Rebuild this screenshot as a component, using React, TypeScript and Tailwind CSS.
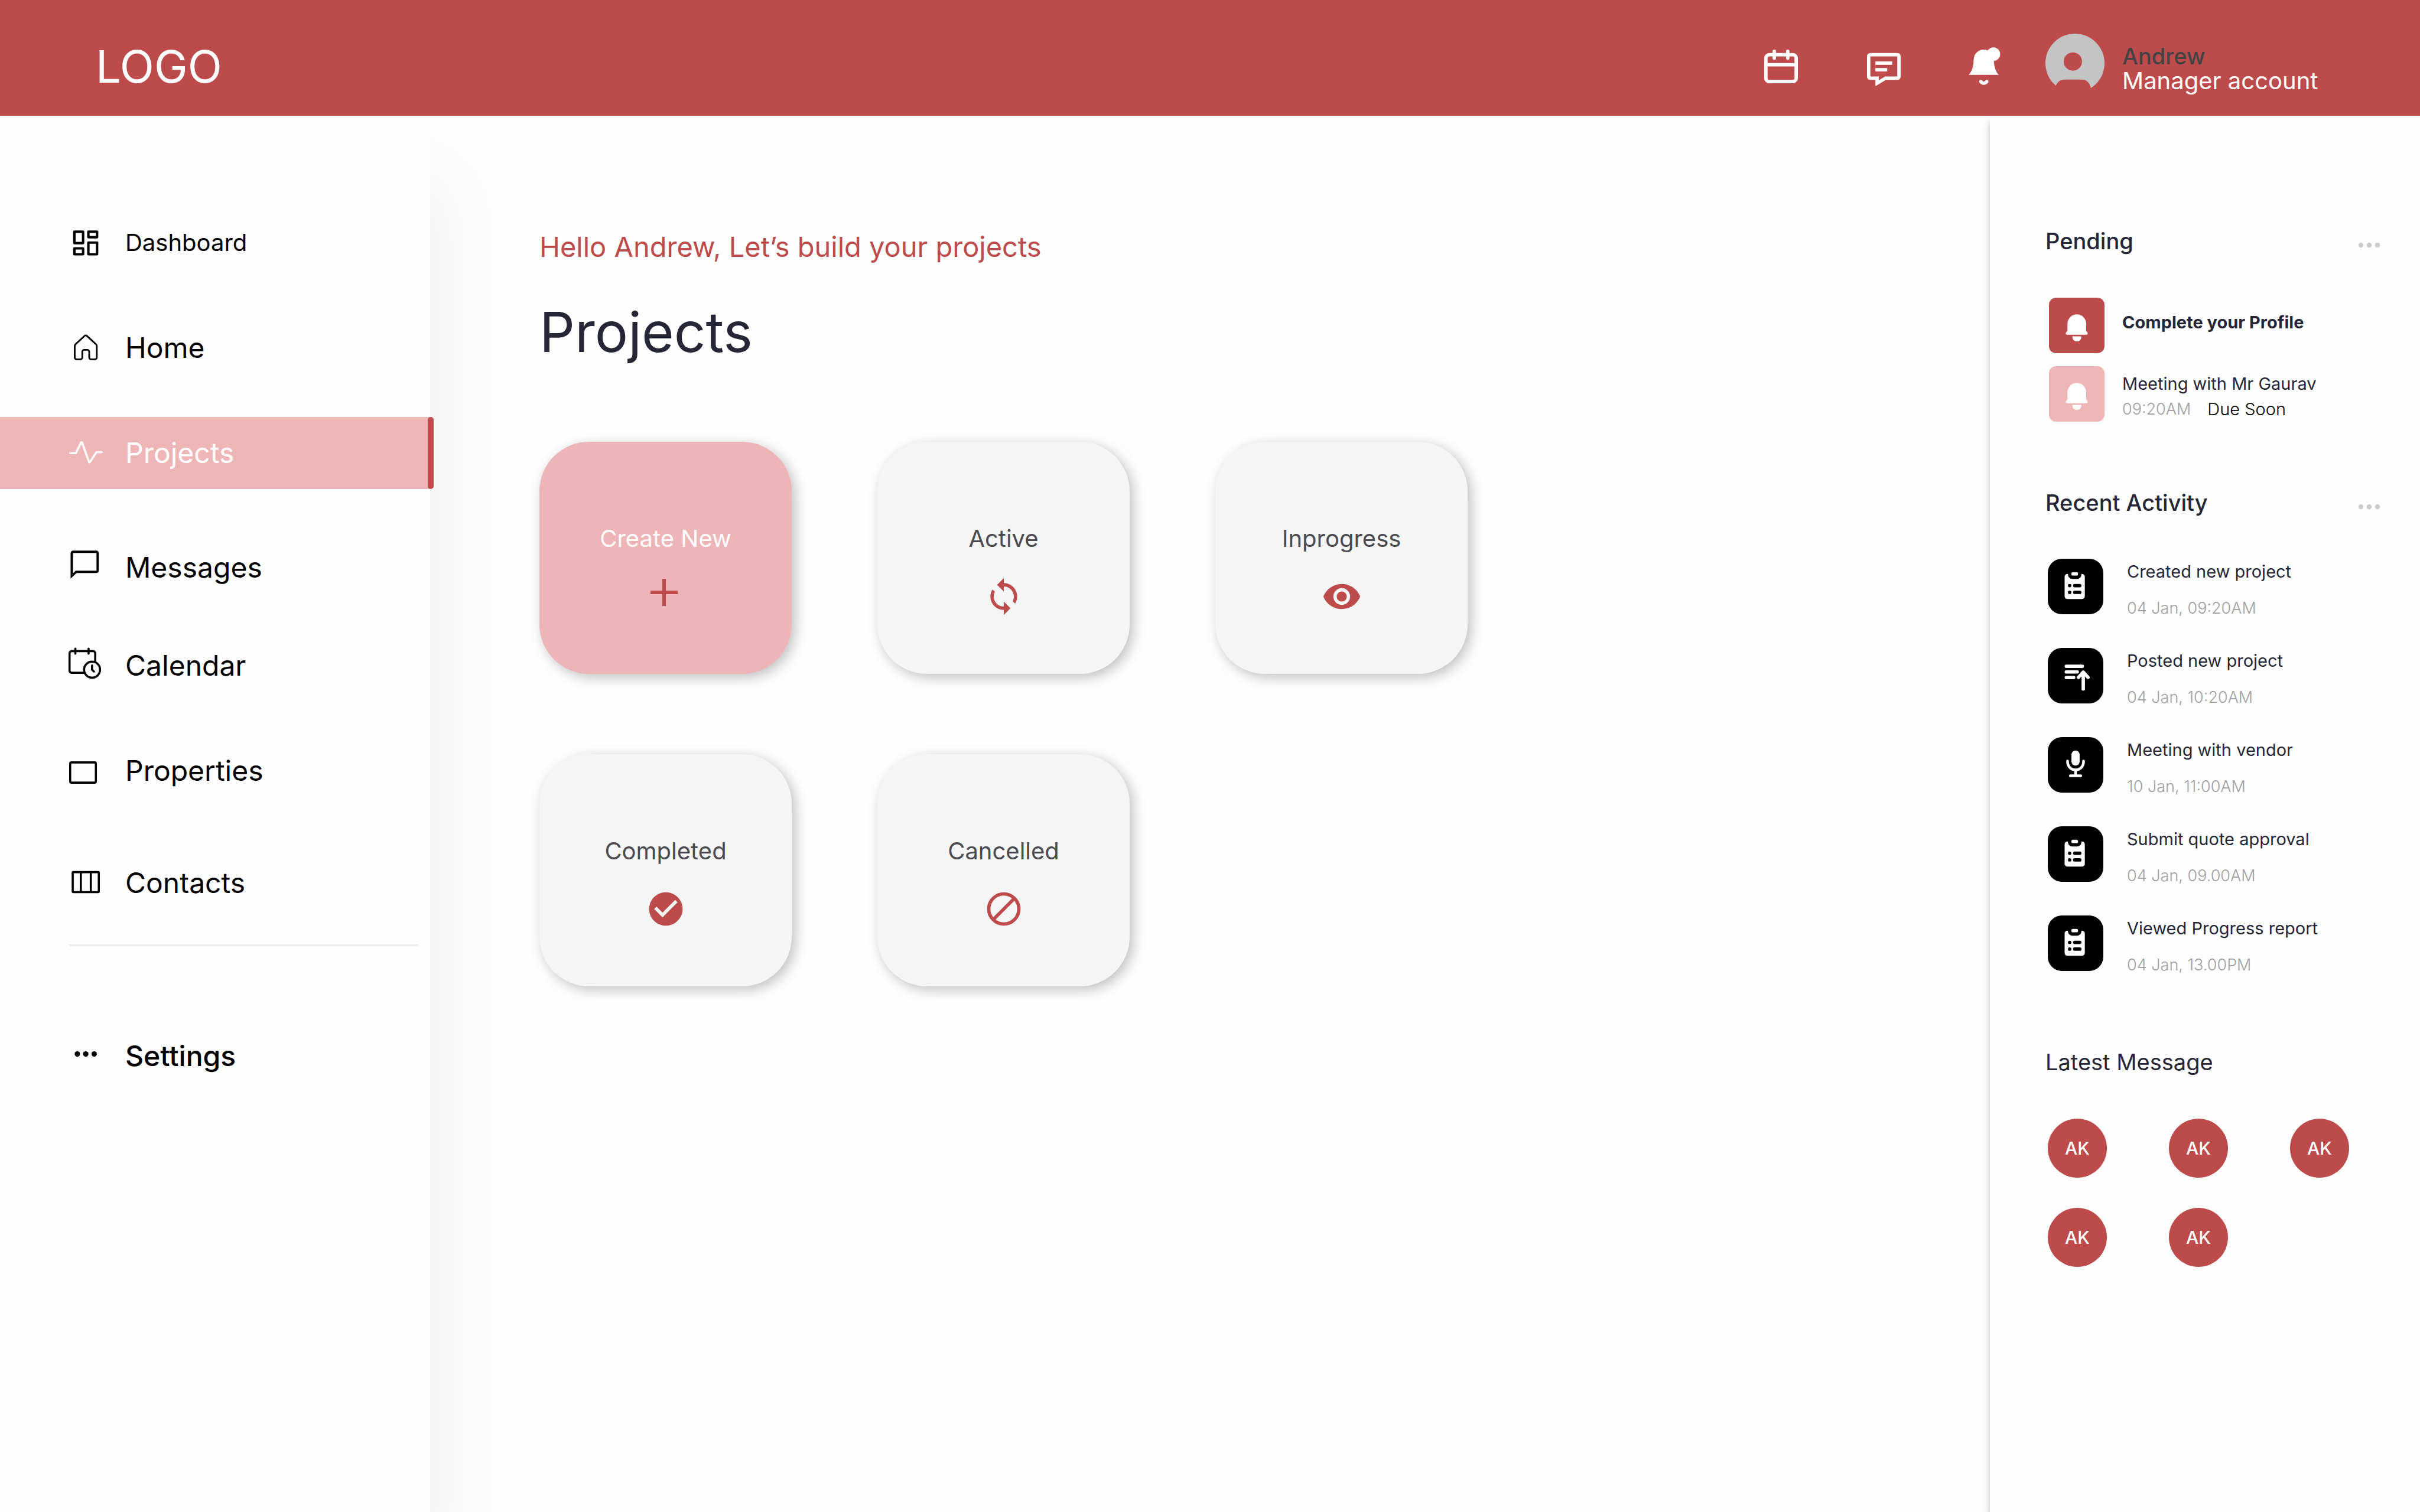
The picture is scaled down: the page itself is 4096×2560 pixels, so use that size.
import type { ReactNode } from "react";

/* ---------- navigation icons (80-unit grid) ---------- */

function NavIcon({ children }: { children: ReactNode }) {
  return (
    <svg
      viewBox="0 0 80 80"
      className="size-[57px] shrink-0 overflow-visible"
      fill="none"
      stroke="currentColor"
      strokeWidth={5}
      aria-hidden="true"
    >
      {children}
    </svg>
  );
}

const dashboardIcon = (
  <NavIcon>
    <g strokeWidth={5.8} strokeLinejoin="round">
      <rect x="12.5" y="12.9" width="20.7" height="27.2" />
      <rect x="12.5" y="52.7" width="20.7" height="14" />
      <rect x="45.7" y="12.9" width="20.7" height="13.2" />
      <rect x="45.7" y="38.9" width="20.7" height="27.8" />
    </g>
  </NavIcon>
);

const homeIcon = (
  <NavIcon>
    <path
      strokeWidth={4}
      d="M13.3 62V35a6 6 0 0 1 2-4.5L36.5 11a4.5 4.5 0 0 1 6 0l21.2 19.5a6 6 0 0 1 2 4.5v27a4.5 4.5 0 0 1-4.5 4.5h-9a4.5 4.5 0 0 1-4.5-4.5V48.5a4.5 4.5 0 0 0-4.5-4.5h-7.4a4.5 4.5 0 0 0-4.5 4.5V62a4.5 4.5 0 0 1-4.5 4.5h-9A4.5 4.5 0 0 1 13.3 62z"
    />
  </NavIcon>
);

const activityIcon = (
  <NavIcon>
    <path
      strokeLinecap="round"
      strokeLinejoin="round"
      d="M2.5 39.6H16L28 15q1.5-2.5 3 0L47 60q1.2 2.5 3 0L65 37.3h12.5"
    />
  </NavIcon>
);

const messageIcon = (
  <NavIcon>
    <path
      fill="currentColor"
      stroke="none"
      fillRule="evenodd"
      d="M9.5-1h55a6 6 0 0 1 6 6v41.3a6 6 0 0 1-6 6H17.5L3.5 65.7V5a6 6 0 0 1 6-6zM9.2 4.7V53l6.3-6.2H65V4.7z"
    />
  </NavIcon>
);

const calendarIcon = (
  <NavIcon>
    <path d="M38 56.3H6a5 5 0 0 1-5-5V9.7a5 5 0 0 1 5-5h51a5 5 0 0 1 5 5V30" />
    <path strokeLinecap="round" d="M14.8-1v12M46.2-1v12" />
    <circle cx="54.5" cy="48.9" r="19" />
    <path strokeLinecap="round" strokeLinejoin="round" d="M54.5 39v10l4.5 4.3" />
  </NavIcon>
);

const propertiesIcon = (
  <NavIcon>
    <rect x="2.5" y="19.5" width="61" height="48" rx="3" />
  </NavIcon>
);

const contactsIcon = (
  <NavIcon>
    <rect x="8.5" y="13.5" width="62" height="47.5" rx="1" />
    <path d="M27.8 13.5V61M51.5 13.5V61" />
  </NavIcon>
);

const settingsIcon = (
  <NavIcon>
    <g fill="currentColor" stroke="none">
      <circle cx="19.5" cy="34.5" r="6.4" />
      <circle cx="39.5" cy="34.5" r="6.4" />
      <circle cx="59.5" cy="34.5" r="6.4" />
    </g>
  </NavIcon>
);

/* ---------- header icons ---------- */

function HeaderCalendar() {
  return (
    <svg viewBox="0 0 80 80" className="size-[57px] overflow-visible" fill="none" stroke="white" strokeWidth={8} aria-hidden="true">
      <rect x="4" y="12" width="72" height="64" rx="8" />
      <path strokeLinecap="round" d="M24 4v16M56 4v16" />
      <path d="M4 36h72" />
    </svg>
  );
}

function HeaderMessage() {
  return (
    <svg viewBox="0 0 80 80" className="size-[57px] overflow-visible" fill="white" aria-hidden="true">
      <path
        fillRule="evenodd"
        d="M8 8h64a8 8 0 0 1 8 8v48a8 8 0 0 1-8 8H45L20 87V72H8a8 8 0 0 1-8-8V16a8 8 0 0 1 8-8zM8 16v48h20v9l15-9h29V16z"
      />
      <path d="M20 28h40v8H20zM20 44h28v8H20z" />
    </svg>
  );
}

function HeaderBell() {
  return (
    <svg viewBox="0 0 80 80" className="size-[57px] overflow-visible" fill="white" aria-hidden="true">
      <path d="M12 24a24 24 0 0 1 48 0c0 16 4 28 11.5 36H0C8 52 12 40 12 24z" />
      <circle cx="59" cy="10.7" r="16" />
      <path d="M29 76q7 8 14 0" fill="none" stroke="white" strokeWidth={8} strokeLinecap="round" />
    </svg>
  );
}

function Avatar() {
  return (
    <svg viewBox="0 0 140 154" className="h-[110px] w-[100px] shrink-0" role="img" aria-label="Andrew">
      <circle cx="70" cy="70" r="70" fill="#c4c4c4" />
      <circle cx="65" cy="66" r="21.7" fill="#bd4b4b" />
      <path d="M25 123C29 114 36 109 44 109H88C98 109 106 118 107.5 129L110 146H20z" fill="#bd4b4b" />
    </svg>
  );
}

/* ---------- card icons ---------- */

const cardSvg = "size-[68px]";

const plusIcon = (
  <svg viewBox="0 0 68 68" className={cardSvg} stroke="currentColor" strokeWidth={6} aria-hidden="true">
    <path d="M31 4v46M8 27h46" />
  </svg>
);

const syncIcon = (
  <svg viewBox="0 0 24 24" className={cardSvg} fill="currentColor" aria-hidden="true">
    <path d="M12 4V1L8 5l4 4V6c3.31 0 6 2.69 6 6 0 1.01-.25 1.97-.7 2.8l1.46 1.46A7.93 7.93 0 0 0 20 12c0-4.42-3.58-8-8-8zm0 14c-3.31 0-6-2.69-6-6 0-1.01.25-1.97.7-2.8L5.24 7.74A7.93 7.93 0 0 0 4 12c0 4.42 3.58 8 8 8v3l4-4-4-4v3z" />
  </svg>
);

const eyeIcon = (
  <svg viewBox="0 0 24 24" className={cardSvg} fill="currentColor" aria-hidden="true">
    <path d="M12 4.5C7 4.5 2.73 7.61 1 12c1.73 4.39 6 7.5 11 7.5s9.27-3.11 11-7.5c-1.73-4.39-6-7.5-11-7.5zM12 17c-2.76 0-5-2.24-5-5s2.24-5 5-5 5 2.24 5 5-2.24 5-5 5zm0-8c-1.66 0-3 1.34-3 3s1.34 3 3 3 3-1.34 3-3-1.34-3-3-3z" />
  </svg>
);

const checkIcon = (
  <svg viewBox="0 0 24 24" className={cardSvg} fill="currentColor" aria-hidden="true">
    <path d="M12 2C6.48 2 2 6.48 2 12s4.48 10 10 10 10-4.48 10-10S17.52 2 12 2zm-2 15l-5-5 1.41-1.41L10 14.17l7.59-7.59L19 8l-9 9z" />
  </svg>
);

const blockIcon = (
  <svg viewBox="0 0 24 24" className={cardSvg} fill="none" stroke="currentColor" strokeWidth={2} aria-hidden="true">
    <circle cx="12" cy="12" r="9" />
    <path d="M5.6 18.4L18.4 5.6" />
  </svg>
);

/* ---------- panel tiles (132-unit grid) ---------- */

function BellTile({ soft }: { soft?: boolean }) {
  return (
    <svg
      viewBox="0 0 132 132"
      className={`size-[94px] shrink-0 rounded-xl ${soft ? "bg-[#efb6b8]" : "bg-[#bd4b4b]"}`}
      fill="white"
      aria-hidden="true"
    >
      <path d="M44 62a22.25 22.25 0 0 1 44.5 0v17l3 4c1.5 2.5 0 5-2.5 5H43c-2.5 0-4-2.5-2.5-5l3.5-4z" />
      <path d="M55.5 92H77c0 7-4 12-10.7 12S55.5 99 55.5 92z" />
    </svg>
  );
}

const clipboardGlyph = (
  <>
    <path
      fill="white"
      d="M47 36h1v1.5A10.5 10.5 0 0 0 58.5 48h11A10.5 10.5 0 0 0 80 37.5V36h1a7 7 0 0 1 7 7v46a7 7 0 0 1-7 7H47a7 7 0 0 1-7-7V43a7 7 0 0 1 7-7z"
    />
    <rect x="56" y="32" width="16" height="8" rx="4" fill="white" />
    <g fill="black">
      <circle cx="52" cy="64" r="4" />
      <circle cx="52" cy="80" r="4" />
      <rect x="60" y="60" width="20" height="8" rx="4" />
      <rect x="60" y="76" width="20" height="8" rx="4" />
    </g>
  </>
);

const postGlyph = (
  <g fill="none" stroke="white" strokeWidth={8} strokeLinecap="round" strokeLinejoin="round">
    <path d="M44 43.7h38M44 57h26M44 70.3h17.5" />
    <path d="M84.3 97.5V58M73 70l11.3-12.5L95.7 70" />
  </g>
);

const micGlyph = (
  <>
    <rect x="56.3" y="31.8" width="19.4" height="36" rx="9.7" fill="white" />
    <g fill="none" stroke="white" strokeWidth={6.3} strokeLinecap="round">
      <path d="M47 57v2a19 19 0 0 0 38 0v-2" />
      <path d="M66 80v11M53.5 92h25" />
    </g>
  </>
);

function ActivityTile({ children }: { children: ReactNode }) {
  return (
    <svg viewBox="0 0 132 132" className="size-[94px] shrink-0 rounded-3xl bg-black" aria-hidden="true">
      {children}
    </svg>
  );
}

/* ---------- data ---------- */

const navItems = [
  { label: "Dashboard", icon: dashboardIcon, space: "mt-0", size: "text-[40px]" },
  { label: "Home", icon: homeIcon, space: "mt-14", size: "text-[48px]" },
  { label: "Projects", icon: activityIcon, space: "mt-14", size: "text-[48px]", active: true },
  { label: "Messages", icon: messageIcon, space: "mt-18", size: "text-[48px]" },
  { label: "Calendar", icon: calendarIcon, space: "mt-11", size: "text-[48px]" },
  { label: "Properties", icon: propertiesIcon, space: "mt-14", size: "text-[48px]" },
  { label: "Contacts", icon: contactsIcon, space: "mt-17", size: "text-[48px]" },
];

const cards = [
  { label: "Create New", icon: plusIcon, primary: true },
  { label: "Active", icon: syncIcon },
  { label: "Inprogress", icon: eyeIcon },
  { label: "Completed", icon: checkIcon },
  { label: "Cancelled", icon: blockIcon },
];

const activity = [
  { title: "Created new project", date: "04 Jan, 09:20AM", glyph: clipboardGlyph },
  { title: "Posted new project", date: "04 Jan, 10:20AM", glyph: postGlyph },
  { title: "Meeting with vendor", date: "10 Jan, 11:00AM", glyph: micGlyph },
  { title: "Submit quote approval", date: "04 Jan, 09.00AM", glyph: clipboardGlyph },
  { title: "Viewed Progress report", date: "04 Jan, 13.00PM", glyph: clipboardGlyph },
];

const messages = ["AK", "AK", "AK", "AK", "AK"];

/* ---------- sections ---------- */

function Header() {
  return (
    <header className="relative z-20 flex h-[196px] shrink-0 items-center bg-[#bd4b4b] pt-7 pr-[176px] pl-[162px]">
      <a href="#" className="text-[76px] leading-[96px] text-white">
        LOGO
      </a>
      <div className="ml-auto flex items-center">
        <button type="button" aria-label="Calendar">
          <HeaderCalendar />
        </button>
        <button type="button" aria-label="Messages" className="ml-[117px]">
          <HeaderMessage />
        </button>
        <button type="button" aria-label="Notifications" className="ml-[115px]">
          <HeaderBell />
        </button>
        <button type="button" className="ml-[73px] flex items-center gap-[30px] text-left">
          <Avatar />
          <span className="flex w-[328px] flex-col pt-2 leading-[42px] whitespace-nowrap">
            <span className="text-[38px] font-medium text-[#434343]">Andrew</span>
            <span className="text-[40px] text-white">Manager account</span>
          </span>
        </button>
      </div>
    </header>
  );
}

function Sidebar() {
  return (
    <nav
      aria-label="Main"
      className="relative z-10 w-[728px] shrink-0 bg-[#fefefe] pt-[154px] shadow-[36px_96px_120px_rgba(0,0,0,0.055)]"
    >
      <ul>
        {navItems.map((item) => (
          <li key={item.label} className={item.space}>
            <a
              href="#"
              aria-current={item.active ? "page" : undefined}
              className={`relative flex h-[122px] items-center gap-[38px] pl-[117px] ${item.size} ${
                item.active ? "bg-[#efb6b8] text-white" : "text-black"
              }`}
            >
              {item.icon}
              {item.label}
              {item.active && <span className="absolute inset-y-0 -right-1.5 w-2.5 rounded-full bg-[#bd4b4b]" />}
            </a>
          </li>
        ))}
      </ul>
      <hr className="mt-[43px] mr-5 ml-[117px] border-t-[3px] border-[#eeeeee]" />
      <a href="#" className="mt-[125px] flex h-[122px] items-center gap-[38px] pl-[117px] text-[48px] font-medium text-black">
        {settingsIcon}
        Settings
      </a>
    </nav>
  );
}

function Main() {
  return (
    <main className="min-w-0 flex-1 pt-[192px] pl-[185px]">
      <p className="text-[47px] leading-[60px] text-[#bd4b4b]">Hello Andrew, Let’s build your projects</p>
      <h1 className="mt-[54px] text-[94px] leading-[120px] text-[#262736]">Projects</h1>
      <div className="mt-[126px] grid grid-cols-[repeat(3,minmax(0,427px))] gap-x-[145px] gap-y-[136px]">
        {cards.map((card) => (
          <button
            key={card.label}
            type="button"
            className={`flex h-[393px] flex-col items-center gap-10 rounded-[84px] pt-[140px] text-[#bd4b4b] shadow-[6px_6px_22px_rgba(0,0,0,0.25)] ${
              card.primary ? "bg-[#edb5b7]" : "bg-[#f5f5f5]"
            }`}
          >
            <span className={`text-[40px] leading-[48px] ${card.primary ? "text-white" : "text-[#4b4b4f]"}`}>{card.label}</span>
            {card.icon}
          </button>
        ))}
      </div>
    </main>
  );
}

function PanelHeading({ children, menu }: { children: ReactNode; menu?: boolean }) {
  return (
    <div className="flex items-center justify-between pr-[66px]">
      <h2 className={`text-[38px] leading-[48px] text-[#262736] ${menu ? "font-medium" : "font-normal"}`}>{children}</h2>
      {menu && (
        <button type="button" aria-label="More options">
          <svg viewBox="0 0 40 48" className="h-12 w-10" fill="#cccccc" aria-hidden="true">
            <circle cx="6" cy="31" r="4.3" />
            <circle cx="20" cy="31" r="4.3" />
            <circle cx="34" cy="31" r="4.3" />
          </svg>
        </button>
      )}
    </div>
  );
}

function Panel() {
  return (
    <aside className="relative z-10 w-[728px] shrink-0 bg-[#fefefe] pt-[188px] pl-[94px] shadow-[0_11px_11px_rgba(0,0,0,0.25)]">
      <PanelHeading menu>Pending</PanelHeading>
      <ul className="mt-[72px] ml-1.5 flex flex-col gap-[22px] text-[29px] leading-[43px] text-[#262736]">
        <li className="flex gap-[30px]">
          <BellTile />
          <p className="pt-5 font-bold">Complete your Profile</p>
        </li>
        <li className="flex gap-[30px]">
          <BellTile soft />
          <div className="pt-2">
            <p>Meeting with Mr Gaurav</p>
            <p className="flex gap-7 font-light">
              <span className="text-[27px] text-[#a0a0a0]">09:20AM</span>
              <span className="text-black">Due Soon</span>
            </p>
          </div>
        </li>
      </ul>

      <div className="mt-[113px]">
        <PanelHeading menu>Recent Activity</PanelHeading>
      </div>
      <ul className="mt-[71px] ml-1 flex flex-col gap-[49px] leading-9">
        {activity.map((item) => (
          <li key={item.title} className="flex items-start gap-10">
            <ActivityTile>{item.glyph}</ActivityTile>
            <div className="flex flex-col gap-[26px] pt-1">
              <p className="text-[29px] text-[#262736]">{item.title}</p>
              <p className="text-[27px] font-light text-[#a0a0a0]">{item.date}</p>
            </div>
          </li>
        ))}
      </ul>

      <div className="mt-[122px]">
        <PanelHeading>Latest Message</PanelHeading>
      </div>
      <div className="mt-[72px] ml-1 grid grid-cols-[repeat(3,100px)] gap-x-[105px] gap-y-[51px]">
        {messages.map((initials, i) => (
          <button
            key={i}
            type="button"
            className="flex size-[100px] items-center justify-center rounded-full bg-[#bd4b4b] text-[30px] font-medium text-white"
          >
            {initials}
          </button>
        ))}
      </div>
    </aside>
  );
}

export default function App() {
  return (
    <div className="flex min-h-screen flex-col bg-[#fefefe] font-['Inter',sans-serif]">
      <Header />
      <div className="flex flex-1 overflow-hidden">
        <Sidebar />
        <Main />
        <Panel />
      </div>
    </div>
  );
}
